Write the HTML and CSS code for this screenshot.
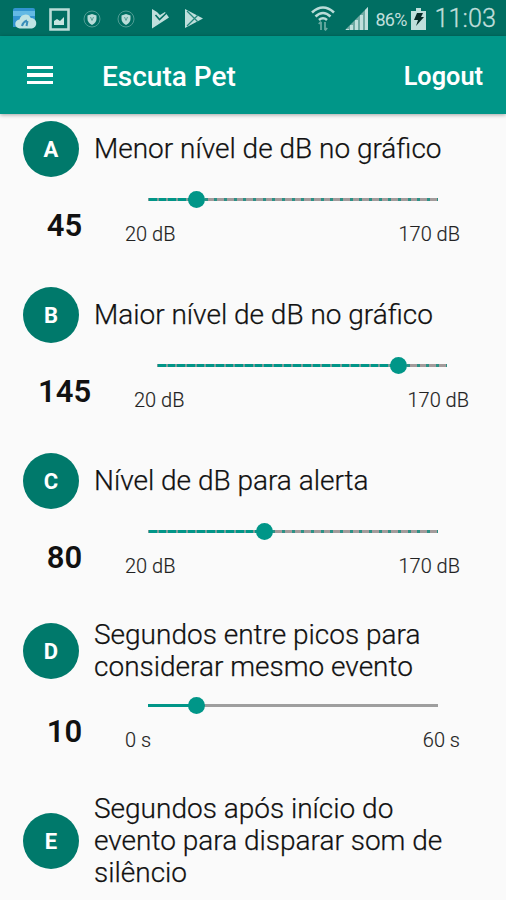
FILE: index.html
```
<!DOCTYPE html>
<html lang="pt-BR">

<head>
    <meta charset="UTF-8">
    <title>Escuta Pet</title>
    <link rel="stylesheet" href="styles.css">
</head>

<body>
    <div class="status-bar">
        <div class="status-left">
            <svg width="25" height="24" viewBox="0 0 25 24">
                <path d="M1 3q0-2 2-2h18q2 0 2 2v17H1z" fill="#3294d0" />
                <path d="M1 4h22v5H1z" fill="#63b9e4" />
                <path d="M8 21.500a4.500 4.500 0 0 1-.5-9 6 6 0 0 1 11.300-1.500 5.300 5.300 0 0 1 1.200 10.500z" fill="#bfe3e3" />
                <path d="M10 19q1-4 5-5.500M15.500 14l-1 5" fill="none" stroke="#398eb9" stroke-width="2" />
            </svg>
            <svg width="21" height="23" viewBox="0 0 21 23">
                <path d="M1.500 1.500h18v20h-18z" fill="none" stroke="#b9dcd8" stroke-width="2.600" />
                <path d="M5 17v-4l3-2 3 2 4-4v8z" fill="#c7e5e1" />
            </svg>
            <svg class="shield" width="18" height="18" viewBox="0 0 18 18">
                <circle cx="9" cy="9" r="8" fill="none" stroke="#4f9d94" />
                <path d="M9 4l4.500 1.500V9q0 3.500-4.500 6Q4.500 12.500 4.500 9V5.500z" fill="#b9dcd8" />
                <path d="M7.500 7l1.500 3.500 1.500-3.500" fill="none" stroke="#58a198" />
            </svg>
            <svg class="shield" width="18" height="18" viewBox="0 0 18 18">
                <circle cx="9" cy="9" r="8" fill="none" stroke="#4f9d94" />
                <path d="M9 4l4.500 1.500V9q0 3.500-4.500 6Q4.500 12.500 4.500 9V5.500z" fill="#b9dcd8" />
                <path d="M7.500 7l1.500 3.500 1.500-3.500" fill="none" stroke="#58a198" />
            </svg>
            <svg class="play" width="19" height="20" viewBox="0 0 19 20">
                <path d="M1 0l5 3 3 3 5-3 4 5.500L1 19.500z" fill="#bfdfdc" />
                <path d="M4.500 6l4 4.500L15.500 4" fill="none" stroke="#006e62" stroke-width="1.600" />
            </svg>
            <svg class="play" width="20" height="20" viewBox="0 0 20 20">
                <path d="M1 0l18 9.500L1 19z" fill="#bfdfdc" />
                <path d="M3 2l11 11M3 17L14 6" fill="none" stroke="#24877c" stroke-width="1.300" />
            </svg>
        </div>
        <div class="status-right">
            <svg class="wifi" width="24" height="26" viewBox="0 0 24 26">
                <path d="M1 6.500Q12-3.500 23 6.500M4.500 10.500q7.500-7 15 0M8 14q4-3.500 8 0" fill="none" stroke="#b9dcd8" stroke-width="2.600" />
                <path d="M10 24v-8M7.800 18L10 15.500M14 16v8M16.200 22L14 24.500" fill="none" stroke="#67aaa1" stroke-width="1.800" />
            </svg>
            <svg class="signal" width="24" height="24" viewBox="0 0 24 24">
                <path d="M0 23L23 0v23z" fill="#6fa9a2" />
                <path d="M1 22h3v1H1zM5 18h3v5H5zM10 13h3v10h-3zM15 8h3v15h-3zM20 3l3-3v23h-3z" fill="#c0dfdc" />
            </svg>
            <span class="percent">86%</span>
            <svg class="battery" width="15" height="22" viewBox="0 0 15 22">
                <path d="M5 0h5v3h5v19H0V3h5z" fill="#c0dfdc" />
                <path d="M6 5h6l-2 4h3L5 18l2-6H3z" fill="#062c28" />
            </svg>
            <span class="clock">11:03</span>
        </div>
    </div>

    <div class="app-bar">
        <div class="menu">
            <span></span>
            <span></span>
            <span></span>
        </div>
        <div class="app-title">Escuta Pet</div>
        <div class="logout">Logout</div>
    </div>

    <div class="settings">
        <div class="item">
            <div class="header">
                <div class="avatar">A</div>
                <div class="title">Menor nível de dB no gráfico</div>
            </div>
            <div class="control">
                <div class="value">45</div>
                <div class="slider">
                    <div class="track ticks">
                        <div class="fill" style="width: 16.6%"></div>
                        <div class="thumb"></div>
                    </div>
                    <div class="range"><span>20 dB</span><span>170 dB</span></div>
                </div>
            </div>
        </div>

        <div class="item">
            <div class="header">
                <div class="avatar">B</div>
                <div class="title">Maior nível de dB no gráfico</div>
            </div>
            <div class="control wide">
                <div class="value">145</div>
                <div class="slider">
                    <div class="track ticks">
                        <div class="fill" style="width: 83.3%"></div>
                        <div class="thumb"></div>
                    </div>
                    <div class="range"><span>20 dB</span><span>170 dB</span></div>
                </div>
            </div>
        </div>

        <div class="item">
            <div class="header">
                <div class="avatar">C</div>
                <div class="title">Nível de dB para alerta</div>
            </div>
            <div class="control">
                <div class="value">80</div>
                <div class="slider">
                    <div class="track ticks">
                        <div class="fill" style="width: 40%"></div>
                        <div class="thumb"></div>
                    </div>
                    <div class="range"><span>20 dB</span><span>170 dB</span></div>
                </div>
            </div>
        </div>

        <div class="item">
            <div class="header">
                <div class="avatar">D</div>
                <div class="title">Segundos entre picos para<br>considerar mesmo evento</div>
            </div>
            <div class="control">
                <div class="value">10</div>
                <div class="slider">
                    <div class="track">
                        <div class="fill" style="width: 16.6%"></div>
                        <div class="thumb"></div>
                    </div>
                    <div class="range"><span>0 s</span><span>60 s</span></div>
                </div>
            </div>
        </div>

        <div class="item">
            <div class="header">
                <div class="avatar">E</div>
                <div class="title">Segundos após início do<br>evento para disparar som de<br>silêncio</div>
            </div>
        </div>
    </div>
</body>

</html>
```
FILE: styles.css
```
* {
    box-sizing: border-box;
}

body {
    height: 900px;
    margin: 0;
    overflow: hidden;
    font-family: Roboto, "Liberation Sans", sans-serif;
    color: #111;
    background-color: #fafafa;
}

svg {
    display: block;
    flex: none;
}

.status-bar {
    display: flex;
    justify-content: space-between;
    height: 36px;
    padding: 0 10px 0 12px;
    color: #c0dfdc;
    background-color: #006e62;
}

.status-left {
    display: flex;
    align-items: center;
    gap: 12px;
    padding-top: 2px;
}

.status-left .shield {
    margin: 0 2px;
}

.status-left .shield:nth-child(3) {
    margin-left: 1px;
}

.status-left .play {
    margin: 0 0 0 2px;
}

.status-right {
    display: flex;
    align-items: center;
    padding-top: 2px;
}

.signal {
    margin-left: 10px;
}

.percent {
    margin-left: 7px;
    font-size: 18px;
    letter-spacing: -0.8px;
}

.battery {
    margin-left: 4px;
}

.clock {
    margin-left: 9px;
    font-size: 25.3px;
    font-weight: 300;
    line-height: 34px;
    -webkit-text-stroke: 0.3px #c0dfdc;
}

.app-bar {
    display: flex;
    align-items: center;
    height: 78px;
    padding: 0 23px 0 27px;
    color: #fff;
    background-color: #009688;
    box-shadow: 0 1px 4px rgba(0, 0, 0, 0.35);
    position: relative;
}

.menu {
    display: flex;
    flex-direction: column;
    gap: 4px;
    width: 26px;
}

.menu span {
    height: 3.5px;
    background-color: #fff;
}

.app-title {
    margin-left: 49px;
    padding-top: 2px;
    font-size: 28px;
    font-weight: 500;
}

.logout {
    margin-left: auto;
    padding-top: 2px;
    font-size: 25.3px;
    font-weight: 600;
}

.settings {
    padding-top: 7px;
}

.header {
    display: flex;
    align-items: center;
    padding-left: 23px;
}

.avatar {
    flex: none;
    width: 56px;
    height: 56px;
    border-radius: 50%;
    font-size: 22px;
    font-weight: 700;
    line-height: 57px;
    text-align: center;
    color: #fff;
    background-color: #00796b;
}

.title {
    margin-left: 15px;
    font-size: 28px;
    font-weight: 300;
    line-height: 32px;
    white-space: nowrap;
    -webkit-text-stroke: 0.25px #111;
}

.control {
    display: flex;
    height: 110px;
    padding-left: 38px;
}

.value {
    width: 53px;
    padding-top: 30px;
    font-size: 31px;
    font-weight: 600;
    line-height: 38px;
    text-align: center;
}

.slider {
    width: 335px;
    margin-left: 34px;
    padding-top: 21px;
}

.wide .slider {
    margin-left: 43px;
}

.track {
    display: flex;
    align-items: center;
    width: 290px;
    height: 3px;
    margin-left: 23px;
    background-color: #9e9e9e;
}

.fill {
    height: 3px;
    background-color: #009688;
}

.thumb {
    flex: none;
    width: 17px;
    height: 17px;
    margin-left: -8.5px;
    border-radius: 50%;
    background-color: #009688;
}

.ticks {
    background: repeating-linear-gradient(90deg, #2d9186 0 1.5px, #a39b9b 1.5px 8.17px, #2d9186 8.17px 9.667px);
}

.ticks .fill {
    background: repeating-linear-gradient(90deg, #7b9b97 0 1px, #009688 1px 8.67px, #7b9b97 8.67px 9.667px);
}

.range {
    display: flex;
    justify-content: space-between;
    margin-top: 21px;
    font-size: 20px;
    font-weight: 300;
    line-height: 24px;
    color: #222;
    -webkit-text-stroke: 0.15px #222;
}
```
